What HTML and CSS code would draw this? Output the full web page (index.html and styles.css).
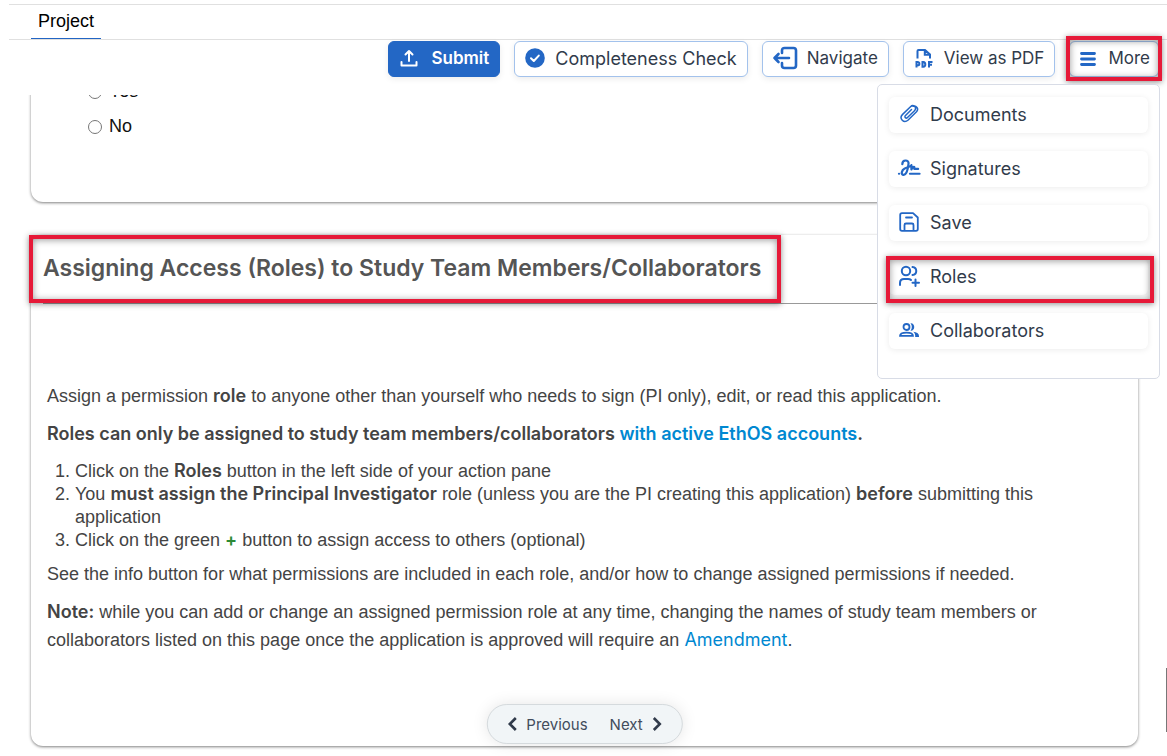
FILE: index.html
```html
<!DOCTYPE html>
<html lang="en">
<head>
<meta charset="utf-8">
<meta name="viewport" content="width=device-width, initial-scale=1">
<title>Project</title>
<link rel="stylesheet" href="styles.css">
</head>
<body>
<nav class="tabs"><a class="tab" href="#project">Project</a></nav>

<header class="toolbar">
  <button class="btn btn-primary" type="button">
    <svg class="icon" viewBox="0 0 20 20" fill="none" stroke="currentColor" stroke-width="2" stroke-linecap="round" stroke-linejoin="round"><path d="M10 13V3M6.500 6.500 10 3l3.500 3.500M2.500 14v3.500h15V14"/></svg>
    Submit
  </button>
  <button class="btn btn-wide" type="button">
    <svg class="icon" viewBox="0 0 20 20"><circle cx="10" cy="10" r="9.800" fill="currentColor"/><path d="m6 10.300 2.800 2.700 5-5.400" fill="none" stroke="#fff" stroke-width="2" stroke-linecap="round" stroke-linejoin="round"/></svg>
    Completeness Check
  </button>
  <button class="btn" type="button">
    <svg class="icon icon-large" viewBox="0 0 24 24" fill="none" stroke="currentColor" stroke-width="2.600" stroke-linecap="round" stroke-linejoin="round"><path d="M9 7V4.500Q9 2 11.500 2h9Q23 2 23 4.500v15q0 2.500-2.500 2.500h-9Q9 22 9 19.500V17M16 12H1.500M5.500 8l-4 4 4 4"/></svg>
    Navigate
  </button>
  <button class="btn" type="button">
    <svg class="icon" viewBox="0 0 20 20" fill="none" stroke="currentColor" stroke-width="2"><path d="M3.500 10.500V3q0-1 1-1H11l5 4.500v4M10.800 2v4.800H16"/><path d="M2.500 19.500V14h1.200a1.600 1.600 0 0 1 0 3.300H2.500M8.500 14v4.700h.8q2-.2 2-2.300t-2-2.400zM15 19.500V14h3.500M15 16.800h3"/></svg>
    View as PDF
  </button>
  <div class="more">
    <button class="btn btn-more" type="button" aria-expanded="true">
      <svg class="icon" viewBox="0 0 20 20" fill="none" stroke="currentColor" stroke-width="2.800" stroke-linecap="round"><path d="M3.500 5.500h13M3.500 11h13M3.500 16.500h13"/></svg>
      More
    </button>
    <span class="highlight highlight-more"></span>
    <div class="menu">
      <button class="menu-item" type="button">
        <svg class="icon" viewBox="0 0 20 20" fill="none" stroke="currentColor" stroke-width="1.500" stroke-linecap="round"><path d="m12.500 5.500-6 6c-1.600 1.600.5 3.500 2 2l7-6.800c3-3-1.200-6.700-4-4L3.600 10.400c-4 4 1.200 9.600 5.600 5.600l8.300-8.300c2.800-3-.5-6.500-3.200-5.500"/></svg>
        Documents
      </button>
      <button class="menu-item" type="button">
        <svg class="icon icon-sign" viewBox="0 0 24 20" fill="none" stroke="currentColor" stroke-width="2.300" stroke-linecap="round" stroke-linejoin="round"><path d="M4.500 6c0-5 7-5 6.500-.5C10.500 10 9.300 17 6 17.200c-3.400.2-2.300-5.200 1-6.700 3-1.500 6.200-1.700 7-3.500v4.500c1-2 2-3 3-2.500v2h4M12.500 16h10M1 16h.2"/></svg>
        Signatures
      </button>
      <button class="menu-item" type="button">
        <svg class="icon" viewBox="0 0 20 20" fill="none" stroke="currentColor" stroke-width="1.800" stroke-linejoin="round" stroke-linecap="round"><path d="M3 1.200h11l4.800 4.300V17q0 1.800-1.800 1.800H3Q1.200 18.800 1.200 17V3Q1.200 1.200 3 1.200zM7 5.500h6M5.500 18.500V13q0-1.500 1.500-1.500h6q1.500 0 1.500 1.500v5.500"/></svg>
        Save
      </button>
      <button class="menu-item" type="button">
        <svg class="icon icon-roles" viewBox="0 0 20 22" fill="none" stroke="currentColor" stroke-width="2" stroke-linecap="round"><circle cx="7" cy="6" r="4.200"/><path d="M1 20v-2q0-4 4-4h4q2 0 3 1M13.500 2c5 .5 5 7.500 0 8M16.500 14.500v6.500M13.500 17.700h6.500"/></svg>
        Roles
        <span class="highlight highlight-roles"></span>
      </button>
      <button class="menu-item" type="button">
        <svg class="icon" viewBox="0 0 20 20"><g fill="none" stroke="currentColor" stroke-width="1.800"><circle cx="7.500" cy="7" r="3"/><path d="M1 15.900c0-4.500 13-4.500 13 0z"/></g><path d="M11.500 3.200c5-.5 5 8 0 7.500 1.800-2.200 1.800-5.200 0-7.500zM14.200 11.800c3.400.4 5.800 1.800 5.800 4.200v1h-3.800c.2-2.200-.3-3.900-2-5.200z" fill="currentColor"/></svg>
        Collaborators
      </button>
    </div>
  </div>
</header>

<main class="content" id="project">
  <section class="card card-question">
    <label class="option"><input class="radio" type="radio" name="answer">Yes</label>
    <label class="option"><input class="radio" type="radio" name="answer">No</label>
  </section>

  <section class="card card-roles">
    <h2 class="card-title">Assigning Access (Roles) to Study Team Members/Collaborators<span class="highlight highlight-title"></span></h2>
    <div class="prose">
      <p>Assign a permission <strong>role</strong> to anyone other than yourself who needs to sign (PI only), edit, or read this application.</p>
      <p><strong>Roles can only be assigned to study team members/collaborators <a href="#accounts">with active EthOS accounts</a>.</strong></p>
      <ol>
        <li>Click on the <strong>Roles</strong> button in the left side of your action pane</li>
        <li>You <strong>must assign the Principal Investigator</strong> role (unless you are the PI creating this application) <strong>before</strong> submitting this application</li>
        <li>Click on the green <strong class="plus">+</strong> button to assign access to others (optional)</li>
      </ol>
      <p>See the info button for what permissions are included in each role, and/or how to change assigned permissions if needed.</p>
      <p><strong>Note:</strong> while you can add or change an assigned permission role at any time, changing the names of study team members or collaborators listed on this page once the application is approved will require an <a href="#amendment">Amendment</a>.</p>
    </div>
    <div class="pager">
      <button class="pager-btn" type="button"><svg class="chevron" viewBox="0 0 10 14" fill="none" stroke="currentColor" stroke-width="2.600"><path d="M8 1 2 7l6 6"/></svg>Previous</button>
      <button class="pager-btn" type="button">Next<svg class="chevron" viewBox="0 0 10 14" fill="none" stroke="currentColor" stroke-width="2.600"><path d="m2 1 6 6-6 6"/></svg></button>
    </div>
  </section>
  <span class="scroll-thumb"></span>
</main>
</body>
</html>
```

FILE: styles.css
```css
* { box-sizing: border-box; }

body {
  margin: 0;
  height: 100vh;
  padding-top: 4px;
  display: flex;
  flex-direction: column;
  overflow: hidden;
  background: #fff;
  color: #111;
  font: 18px/23px "Liberation Sans", Arial, sans-serif;
}

button { font-family: Inter, sans-serif; cursor: pointer; }

.tabs {
  margin-left: 9px;
  padding-left: 22px;
  height: 36px;
  flex: none;
  display: flex;
  border-top: 1px solid #e0e0e0;
  border-bottom: 1px solid #e0e0e0;
}

.tab {
  padding: 5px 7px 4px;
  color: #000;
  text-decoration: none;
  border-bottom: 1px solid #2265c4;
}

.toolbar {
  position: relative;
  z-index: 2;
  flex: none;
  height: 55px;
  padding: 1px 8px 0 0;
  display: flex;
  justify-content: flex-end;
  align-items: flex-start;
  gap: 14px;
}

.btn {
  height: 36px;
  padding: 0 10px 2px;
  display: flex;
  align-items: center;
  gap: 10px;
  border: 1px solid #a3c2ec;
  border-radius: 6px;
  background: #fff;
  color: #313b4b;
  font-size: 17px;
  white-space: nowrap;
  box-shadow: 0 2px 6px rgba(0, 0, 0, .08);
}

.btn-wide { font-size: 18px; }
.btn-more { padding: 0 8px 2px; }

.btn-primary {
  background: #2367c5;
  border-color: #2367c5;
  color: #fff;
  font-weight: 600;
  gap: 12px;
}

.icon { width: 20px; height: 20px; flex: none; color: #2367c5; overflow: visible; }
.btn-primary .icon { color: #fff; }
.icon-large { width: 24px; height: 24px; }
.icon-sign { width: 23px; height: 20px; margin: 0 -2px 0 -1px; }
.icon-roles { height: 22px; }

.more { position: relative; }

.menu {
  position: absolute;
  top: 43px;
  right: -1px;
  width: 283px;
  padding: 12px 11px 29px;
  display: flex;
  flex-direction: column;
  gap: 18px;
  background: #fff;
  border: 1px solid #d8dce6;
  border-radius: 5px;
}

.menu-item {
  position: relative;
  height: 36px;
  padding: 0 10px 2px;
  display: flex;
  align-items: center;
  gap: 11px;
  border: 0;
  border-radius: 6px;
  background: #fff;
  color: #313b4b;
  font-size: 18px;
  box-shadow: 0 1px 6px rgba(0, 0, 0, .08);
}

.highlight {
  position: absolute;
  pointer-events: none;
  border: 4px solid #e61938;
  box-shadow: 0 1px 6px rgba(0, 0, 0, .45), inset 0 1px 7px rgba(0, 0, 0, .4);
}

.highlight-more { inset: -5px -3px -4px -3px; }
.highlight-roles { inset: -3px -6px -8px -3px; }
.highlight-title { inset: 0 auto 0 -14px; width: 752px; }

.content {
  position: relative;
  flex: 1;
  min-height: 0;
  padding: 0 29px 0 31px;
  overflow: hidden;
}

.card {
  position: relative;
  background: #fff;
  border-radius: 12px;
  box-shadow: 0 1px 3px rgba(0, 0, 0, .5);
}

.card-question {
  margin-top: -65px;
  padding: 44px 57px 58px;
}

.option { display: flex; align-items: center; gap: 7px; padding: 6px 0; }
.radio { width: 14px; height: 14px; margin: 0; }

.card-roles {
  margin-top: 33px;
  padding-bottom: 92px;
}

.card-title {
  position: relative;
  margin: 0 0 0 12px;
  padding: 20px 0 21px;
  border-bottom: 1px solid #999;
  color: #555;
  font: 600 23px/27px Inter, sans-serif;
}

.prose { padding: 78px 72px 0 16px; color: #444; }
.prose p { margin: 0 0 10px; line-height: 28px; }
.prose p:last-child { margin-bottom: 0; }
.prose ol { margin: 0 0 8px; padding: 2px 0 0 28px; }
.prose strong { font-family: Inter, sans-serif; font-weight: 600; line-height: 1; }
.prose a { color: #0088d1; text-decoration: none; font-family: Inter, sans-serif; line-height: 1; }
.prose .plus { color: #2b8a35; }

.pager {
  position: absolute;
  bottom: 2px;
  left: 50%;
  transform: translateX(-50%);
  height: 40px;
  padding: 0 20px;
  display: flex;
  align-items: center;
  gap: 22px;
  background: #f1f5f7;
  border: 1px solid #d5dadd;
  border-radius: 20px;
  box-shadow: 0 0 16px rgba(0, 0, 0, .1);
}

.pager-btn {
  padding: 0;
  display: flex;
  align-items: center;
  gap: 9px;
  border: 0;
  background: none;
  color: #424c5c;
  font-size: 15px;
}

.chevron { width: 10px; height: 14px; color: #313b4b; }

.scroll-thumb {
  position: absolute;
  right: 0;
  top: 573px;
  width: 1px;
  height: 64px;
  background: #777;
}
```
